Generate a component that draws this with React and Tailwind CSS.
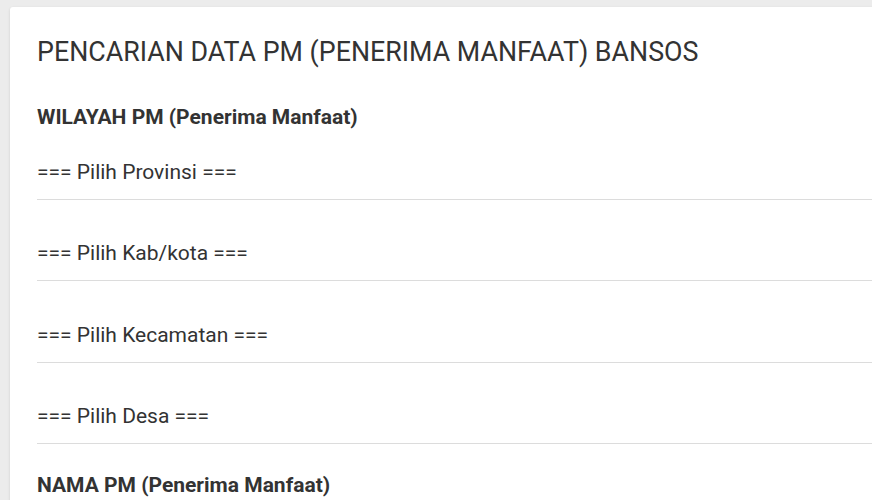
import React from "react";

const wilayah = [
  "=== Pilih Provinsi ===",
  "=== Pilih Kab/kota ===",
  "=== Pilih Kecamatan ===",
  "=== Pilih Desa ===",
];

const App = () => {
  return (
    <div
      className="h-[500px] overflow-hidden bg-[#ececec] pl-[10px] pt-[7px]"
      style={{ fontFamily: "Roboto, 'Liberation Sans', sans-serif" }}
    >
      <div className="h-[600px] w-[900px] rounded-[3px] bg-white pl-[27px] pt-[29px] text-[#333] shadow-[0_1px_3px_rgba(0,0,0,0.12)]">
        <h1 className="text-[26.8px] leading-[32px] font-normal">
          PENCARIAN DATA PM (PENERIMA MANFAAT) BANSOS
        </h1>
        <h4 className="mt-[37px] text-[21px] leading-[25px] font-bold">
          WILAYAH PM (Penerima Manfaat)
        </h4>
        <div className="mt-[30px] flex flex-col gap-[41.8px]">
          {wilayah.map((w) => (
            <div
              key={w}
              className="border-b border-[#dcdcdc] pb-[13.7px] text-[21px] leading-[25px]"
            >
              {w}
            </div>
          ))}
        </div>
        <h4 className="mt-[29.3px] text-[21px] leading-[25px] font-bold">
          NAMA PM (Penerima Manfaat)
        </h4>
      </div>
    </div>
  );
};

export default App;
